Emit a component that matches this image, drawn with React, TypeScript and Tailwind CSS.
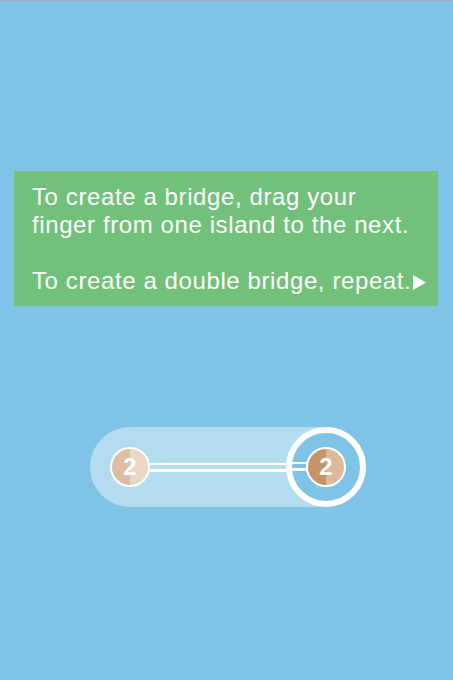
function Node({ a, b }: { a: string; b: string }) {
  return (
    <div
      className="relative z-10 w-[40px] h-[40px] shrink-0 rounded-full border-2 border-white flex items-center justify-center"
      style={{ background: `linear-gradient(to right, ${a} 50%, ${b} 50%)` }}
    >
      <span
        className="text-white text-[24px] font-bold leading-none"
        style={{ fontFamily: '"Liberation Sans", sans-serif' }}
      >
        2
      </span>
    </div>
  );
}

function Bridge({ className }: { className: string }) {
  return (
    <div className={`flex flex-col gap-[4px] ${className}`}>
      <div className="h-[2.5px] bg-white" />
      <div className="h-[2.5px] bg-white" />
    </div>
  );
}

export default function App() {
  return (
    <div className="w-[453px] h-[680px] bg-[#7fc3e6] border-t border-[#a4acb8] flex flex-col overflow-hidden">
      <div
        className="mt-[170px] ml-[14px] w-[424px] h-[135px] bg-[#71c17b] pl-[18px] pt-[12px] text-white text-[24px] leading-[28px] tracking-[0.6px] whitespace-nowrap"
        style={{ fontFamily: '"Liberation Sans", sans-serif' }}
      >
        <div>To create a bridge, drag your</div>
        <div>finger from one island to the next.</div>
        <div className="h-[28px]" />
        <div className="flex items-center">
          <span>To create a double bridge, repeat.</span>
          <svg width="15" height="15" viewBox="0 0 15 15" className="ml-[1px] mt-[3px]">
            <polygon points="1,0 14,7.5 1,15" fill="white" />
          </svg>
        </div>
      </div>
      <div className="mt-[121px] ml-[90px] w-[276px] h-[80px] rounded-full bg-[#b4dcf0] flex items-center pl-[20px]">
        <Node a="#dcbea4" b="#ead7c6" />
        <Bridge className="flex-1" />
        <div className="relative w-[80px] h-[80px] shrink-0 rounded-full border-[6px] border-white bg-[#7fc3e6] flex items-center justify-center">
          <Bridge className="absolute left-[-6px] w-[30px] top-[28.5px]" />
          <Node a="#c6946b" b="#dbb99a" />
        </div>
      </div>
    </div>
  );
}
